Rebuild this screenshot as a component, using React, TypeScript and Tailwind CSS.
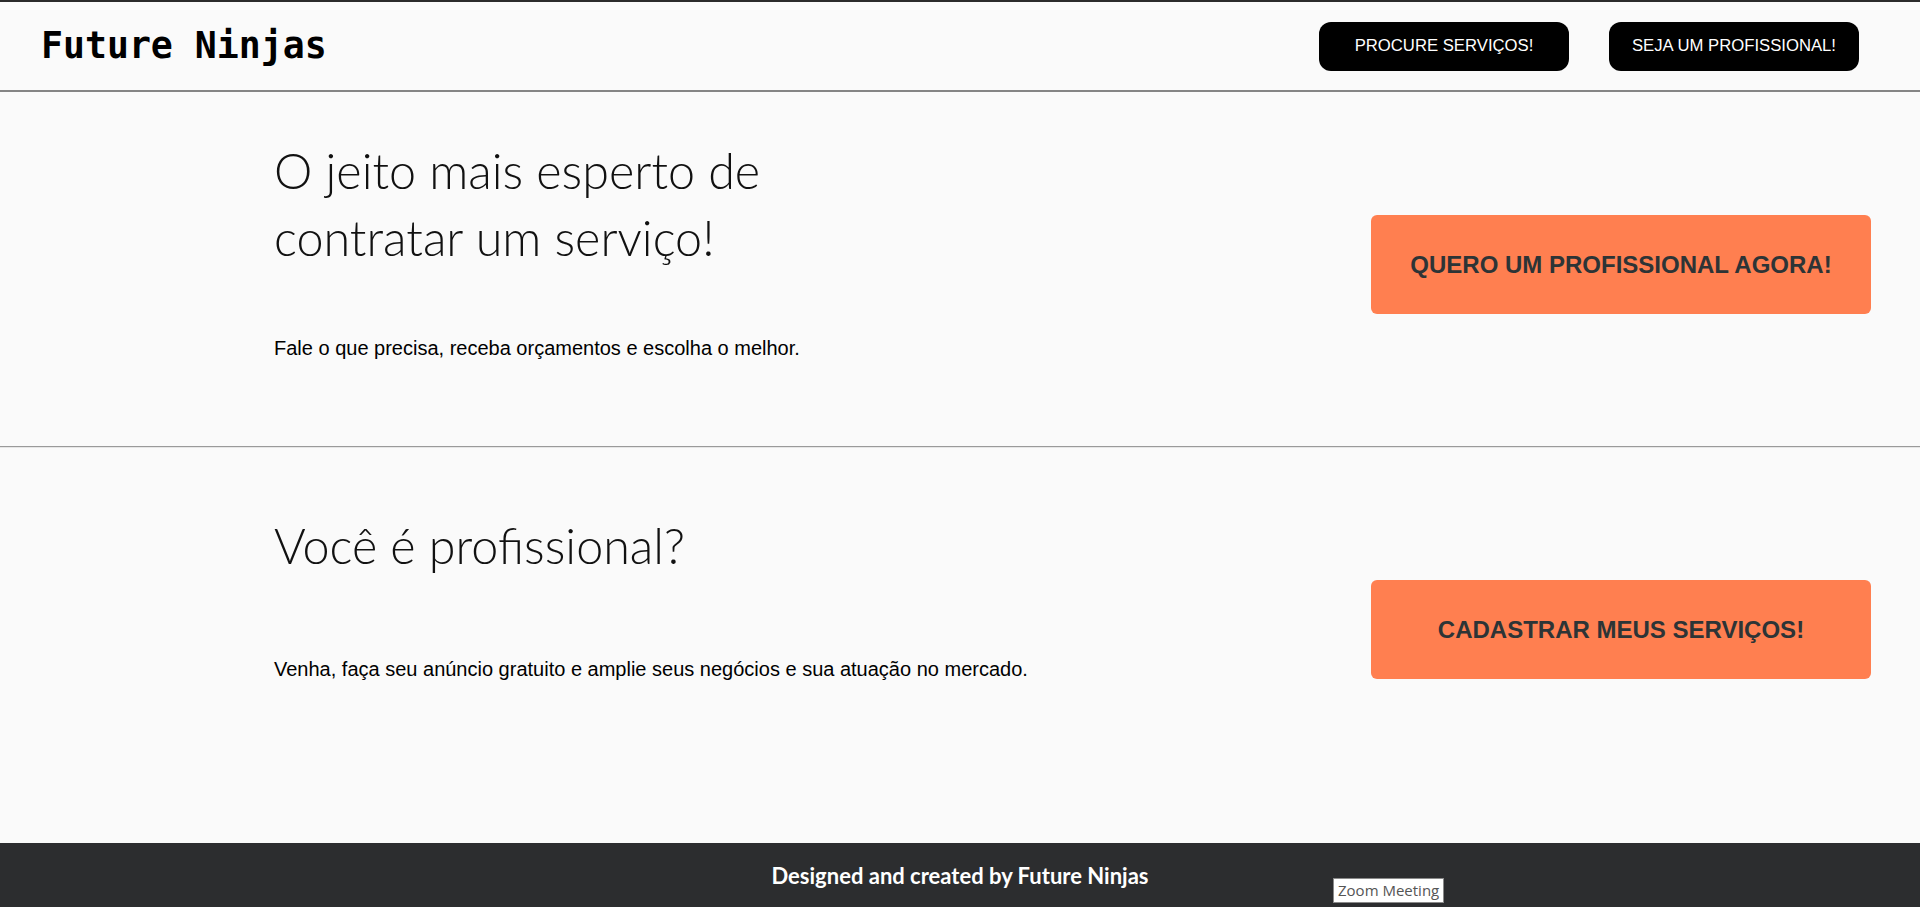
import React from "react";

const sans = "font-['Liberation_Sans',Arial,sans-serif]";
const light = "font-['Lato',sans-serif] font-light";

function Header() {
  return (
    <header className="flex h-[92px] items-center justify-between border-t-2 border-b-2 border-t-[#2b2b2b] border-b-[#858585] bg-[#fafafa] pl-[41px] pr-[61px]">
      <h1 className="font-['DejaVu_Sans_Mono',monospace] text-[36.5px] font-bold leading-none text-black">
        Future Ninjas
      </h1>
      <nav className="flex gap-[40px]">
        <button className={`h-[49px] w-[250px] rounded-[12px] bg-black text-[16.7px] text-white ${sans}`}>
          PROCURE SERVIÇOS!
        </button>
        <button className={`h-[49px] w-[250px] rounded-[12px] bg-black text-[16.7px] text-white ${sans}`}>
          SEJA UM PROFISSIONAL!
        </button>
      </nav>
    </header>
  );
}

function CtaButton({ label }: { label: string }) {
  return (
    <button
      className={`h-[99px] w-[500px] rounded-[6px] bg-[#ff7f50] text-[24px] font-bold text-[#2d3436] ${sans}`}
    >
      {label}
    </button>
  );
}

export default function App() {
  return (
    <div className="flex min-h-screen flex-col bg-[#fafafa]">
      <Header />

      <section className="flex justify-between pl-[274px] pr-[49px] pt-[45px] pb-[84px]">
        <div>
          <h2 className={`${light} w-[530px] text-[48.5px] leading-[67px] text-[#111]`}>
            O jeito mais esperto de contratar um serviço!
          </h2>
          <p className={`${sans} mt-[64px] text-[20px] leading-[27px] text-black`}>
            Fale o que precisa, receba orçamentos e escolha o melhor.
          </p>
        </div>
        <div className="mt-[78px]">
          <CtaButton label="QUERO UM PROFISSIONAL AGORA!" />
        </div>
      </section>

      <hr className="border-t border-b border-t-[#9a9a9a] border-b-[#e6e6e6]" />

      <section className="flex justify-between pl-[274px] pr-[49px] pt-[64px] pb-[160px]">
        <div>
          <h2 className={`${light} text-[48.5px] leading-[67px] text-[#111]`}>
            Você é profissional?
          </h2>
          <p className={`${sans} mt-[77px] text-[20px] leading-[27px] text-black`}>
            Venha, faça seu anúncio gratuito e amplie seus negócios e sua atuação no mercado.
          </p>
        </div>
        <div className="mt-[68px]">
          <CtaButton label="CADASTRAR MEUS SERVIÇOS!" />
        </div>
      </section>

      <footer className="relative flex flex-1 justify-center bg-[#2c2d2f] pt-[19px] pb-[16px]">
        <p className="font-['Lato',sans-serif] text-[22px] font-bold leading-[28px] text-white">
          Designed and created by Future Ninjas
        </p>
        <span className="absolute left-[1333px] top-[35px] border border-[#8a8a8a] bg-white px-[4px] py-[2px] font-['Open_Sans',sans-serif] text-[15px] leading-[19px] text-[#555]">
          Zoom Meeting
        </span>
      </footer>
    </div>
  );
}
